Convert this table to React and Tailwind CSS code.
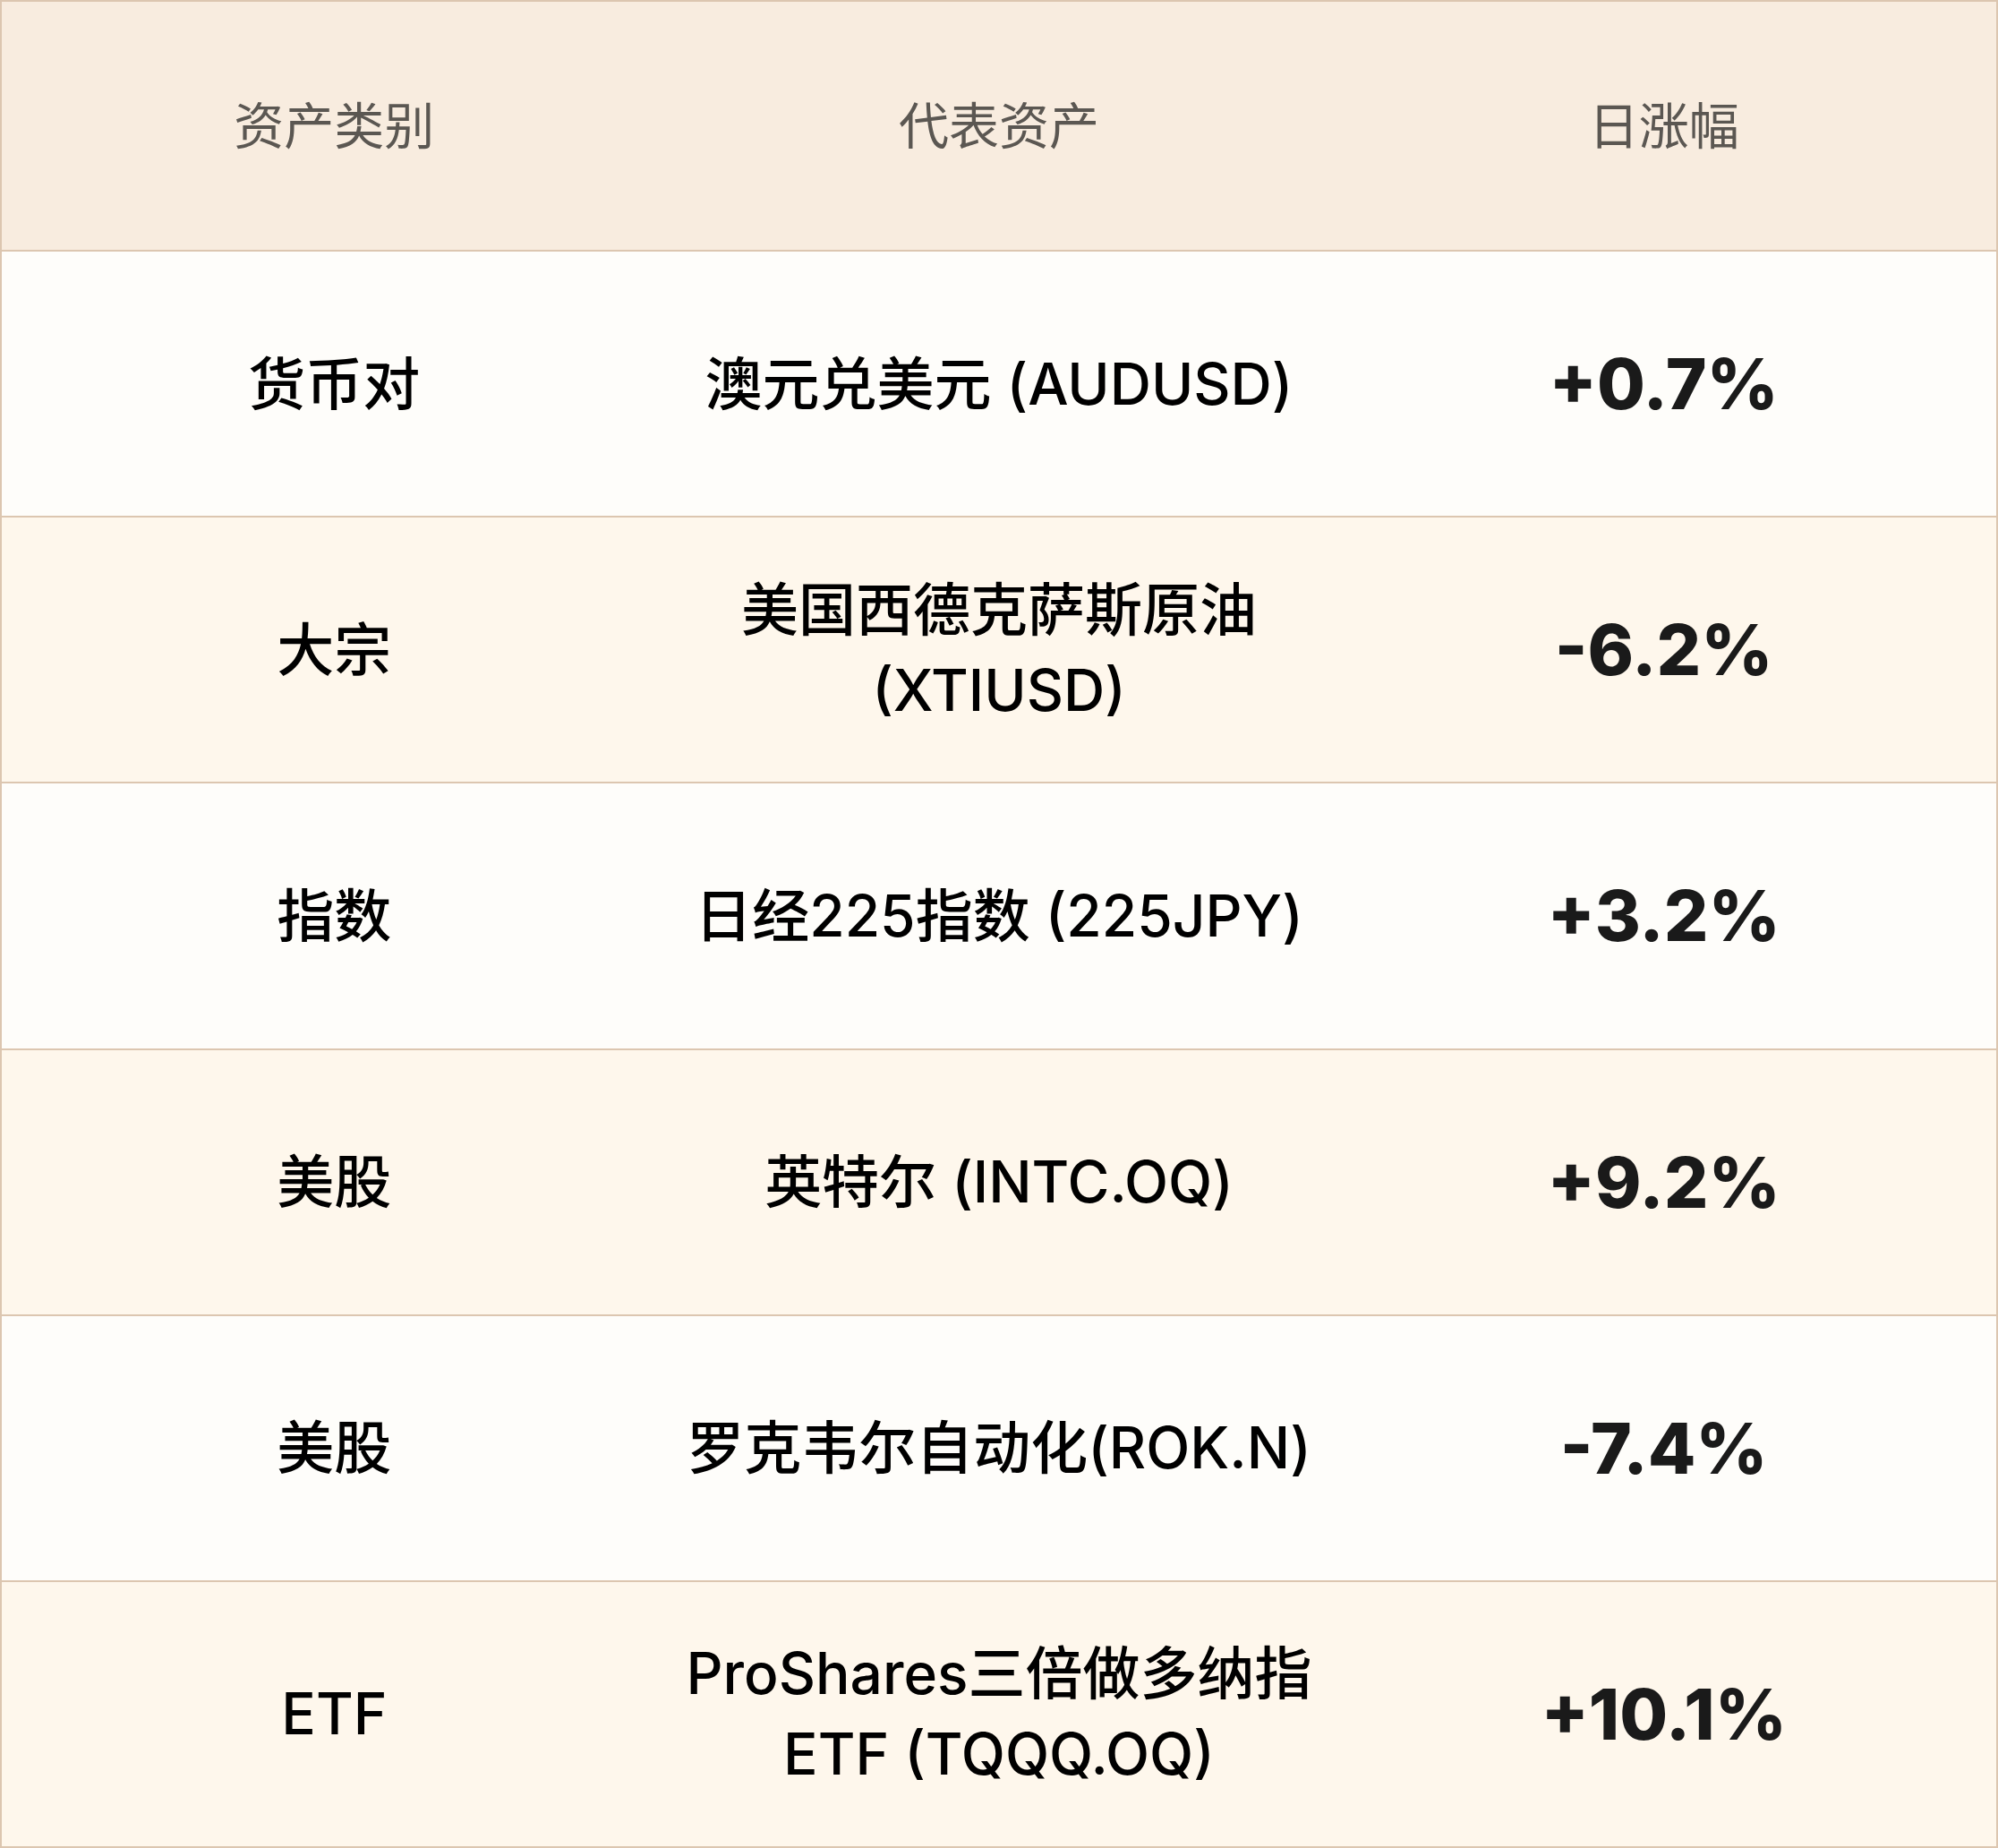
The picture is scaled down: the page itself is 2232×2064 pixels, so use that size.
import React from 'react';

const rows = [
  { type: '货币对', asset: ['澳元兑美元 (AUDUSD)'], change: '+0.7%' },
  { type: '大宗', asset: ['美国西德克萨斯原油', '(XTIUSD)'], change: '-6.2%' },
  { type: '指数', asset: ['日经225指数 (225JPY)'], change: '+3.2%' },
  { type: '美股', asset: ['英特尔 (INTC.OQ)'], change: '+9.2%' },
  { type: '美股', asset: ['罗克韦尔自动化(ROK.N)'], change: '-7.4%' },
  { type: 'ETF', asset: ['ProShares三倍做多纳指', 'ETF (TQQQ.OQ)'], change: '+10.1%' },
];

const font = { fontFamily: '"Inter", "Noto Sans CJK SC", sans-serif' };

export default function App() {
  return (
    <div
      className="w-[2232px] h-[2064px] flex flex-col border-2 border-[#dcc6b0] text-black"
      style={font}
    >
      {/* Header */}
      <div className="h-[277px] grid grid-cols-3 items-center bg-[#f8ecdf] text-[#5b5752] text-[56px]">
        <div className="text-center">资产类别</div>
        <div className="text-center">代表资产</div>
        <div className="text-center">日涨幅</div>
      </div>

      {/* Body */}
      {rows.map((row, i) => (
        <div
          key={i}
          className={`flex-1 grid grid-cols-3 items-center border-t-2 border-[#dcc6b0] ${
            i % 2 === 0 ? 'bg-[#fefdfa]' : 'bg-[#fef7ec]'
          }`}
        >
          <div className="text-center text-[64px] font-medium">{row.type}</div>
          <div className="text-center text-[64px] font-medium leading-[90px]">
            {row.asset.map((line, j) => (
              <div key={j} className="whitespace-nowrap">{line}</div>
            ))}
          </div>
          <div className="text-center text-[78px] font-extrabold text-[#1a1a1a]">{row.change}</div>
        </div>
      ))}
    </div>
  );
}
